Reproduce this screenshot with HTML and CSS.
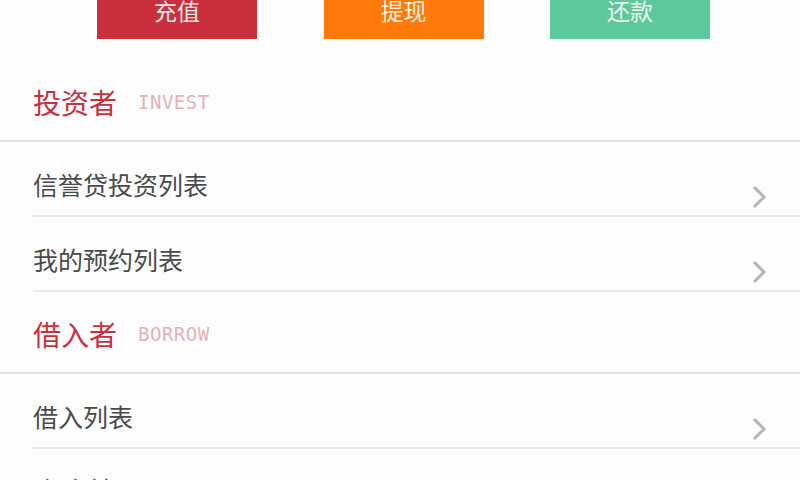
FILE: index.html
```html
<!DOCTYPE html>
<html>
	<head>
		<meta charset="utf-8">
		<title>我的账户</title>
		<link rel="stylesheet" href="styles.css">
	</head>
	<body>
		<div id="wrap">
			<div class="actions">
				<div class="btn recharge">充值</div>
				<div class="btn withdraw">提现</div>
				<div class="btn repay">还款</div>
			</div>

			<div class="section">
				<span class="title">投资者</span>
				<span class="sub">INVEST</span>
			</div>
			<ul class="list">
				<li>
					<span class="name">信誉贷投资列表</span>
					<svg class="arrow" width="18" height="26" viewBox="0 0 18 26"><path d="M4 3 L14 13 L4 23" fill="none" stroke="#b4b4b4" stroke-width="3"/></svg>
				</li>
				<li>
					<span class="name">我的预约列表</span>
					<svg class="arrow" width="18" height="26" viewBox="0 0 18 26"><path d="M4 3 L14 13 L4 23" fill="none" stroke="#b4b4b4" stroke-width="3"/></svg>
				</li>
			</ul>

			<div class="section">
				<span class="title">借入者</span>
				<span class="sub">BORROW</span>
			</div>
			<ul class="list">
				<li>
					<span class="name">借入列表</span>
					<svg class="arrow" width="18" height="26" viewBox="0 0 18 26"><path d="M4 3 L14 13 L4 23" fill="none" stroke="#b4b4b4" stroke-width="3"/></svg>
				</li>
			</ul>

			<div class="section">
				<span class="title">资金管理</span>
			</div>
		</div>
	</body>
</html>
```

FILE: styles.css
```css
*{
	margin: 0;
	padding: 0;
}

body{
	background: #fdfdfd;
	font-family: "Noto Sans CJK SC", "Noto Sans", sans-serif;
	overflow: hidden;
}

#wrap{
	width: 800px;
	margin-top: -18px;/*页面已向上滚动一点*/
}

.actions{
	display: flex;
	justify-content: space-between;
	padding: 0 90px 0 97px;
	margin-bottom: 21px;
}
.btn{
	width: 160px;
	height: 57px;
	line-height: 57px;
	text-align: center;
	font-size: 23px;
	color: rgba(255,255,255,0.92);
}
.recharge{
	background: #c92f3c;
}
.withdraw{
	background: #ff7a0b;
}
.repay{
	background: #5cc89c;
}

.section{
	height: 77px;
	padding: 3px 0 0 33px;
	display: flex;
	align-items: center;
	border-bottom: 2px solid #e4e4e4;
}
.title{
	font-size: 28px;
	color: #c9303e;
}
.sub{
	margin-left: 21px;
	font-family: "DejaVu Sans Mono", monospace;
	font-size: 19px;
	letter-spacing: 0.5px;
	color: #e2b2ba;
}

.list{
	list-style: none;
}
.list li{
	height: 73px;
	margin-left: 33px;
	padding-right: 32px;
	display: flex;
	justify-content: space-between;
	align-items: flex-start;
	border-bottom: 2px solid #e9e9e9;
}
.name{
	margin-top: 26px;
	line-height: 32px;
	font-size: 25px;
	color: #4a4a4a;
}
.arrow{
	margin-top: 42px;
}
```
